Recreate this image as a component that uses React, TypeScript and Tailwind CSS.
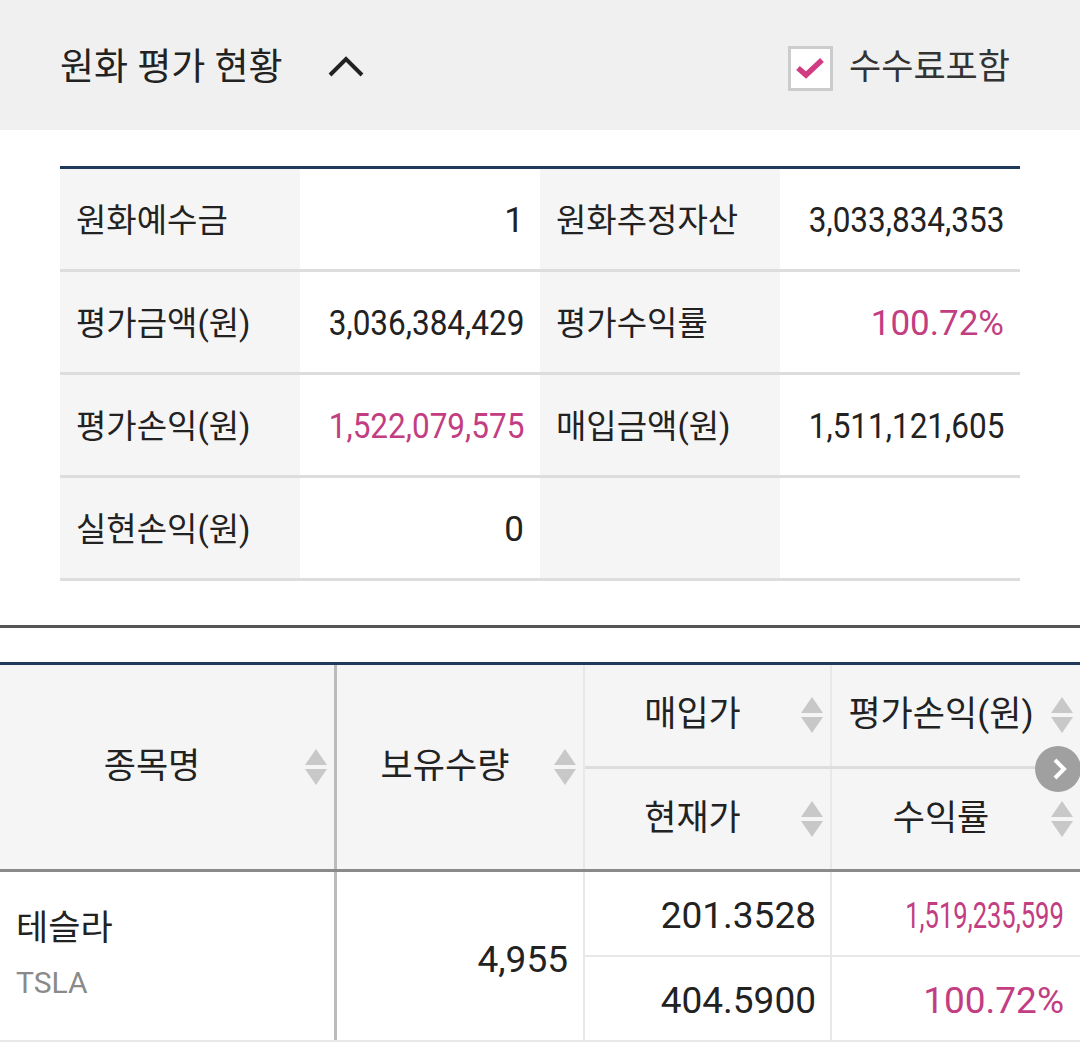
import React from 'react';

const PINK = 'text-[#c23d82]';

const SortIcon = () => (
  <svg width="24" height="38" viewBox="0 0 24 38" className="shrink-0">
    <path d="M12 1 L23 17 L1 17 Z" fill="#c8c8c8" />
    <path d="M1 21 L23 21 L12 37 Z" fill="#c8c8c8" />
  </svg>
);

const HeadCell = ({ label, className = '' }: { label: string; className?: string }) => (
  <div className={`flex items-center pr-[6px] ${className}`}>
    <span className="flex-1 text-center">{label}</span>
    <SortIcon />
  </div>
);

// long amounts are squeezed to fit the cell, like the app does
const Num = ({ v, squeeze }: { v: string; squeeze?: boolean }) =>
  squeeze ? <span className="inline-block origin-right scale-x-[0.9]">{v}</span> : <span>{v}</span>;

const summaryRows: { l1: string; v1: string; p1?: boolean; l2: string; v2: string; p2?: boolean }[] = [
  { l1: '원화예수금', v1: '1', l2: '원화추정자산', v2: '3,033,834,353' },
  { l1: '평가금액(원)', v1: '3,036,384,429', l2: '평가수익률', v2: '100.72%', p2: true },
  { l1: '평가손익(원)', v1: '1,522,079,575', p1: true, l2: '매입금액(원)', v2: '1,511,121,605' },
  { l1: '실현손익(원)', v1: '0', l2: '', v2: '' },
];

export default function App() {
  return (
    <div className="w-[1080px] h-[1050px] overflow-hidden bg-white text-[#222] font-['Roboto','Noto_Sans_CJK_KR',sans-serif]">
      {/* header */}
      <div className="h-[130px] bg-[#f0f0f0] flex items-center justify-between pl-[60px] pr-[70px] pt-[6px]">
        <div className="flex items-center">
          <h1 className="text-[37px] font-normal">원화 평가 현황</h1>
          <svg width="38" height="24" viewBox="0 0 38 24" className="ml-[44px] mb-[4px]">
            <path d="M3 21 L19 5 L35 21" fill="none" stroke="#222" strokeWidth="4" />
          </svg>
        </div>
        <div className="flex items-center">
          <div className="w-[45px] h-[45px] border-[3px] border-[#cccccc] bg-white flex items-center justify-center">
            <svg width="30" height="24" viewBox="0 0 30 24">
              <path d="M3 12 L11 19 L27 4" fill="none" stroke="#d13b82" strokeWidth="5.5" />
            </svg>
          </div>
          <span className="ml-[16px] text-[35px] text-[#333]">수수료포함</span>
        </div>
      </div>

      {/* summary */}
      <div className="px-[60px] pt-[36px]">
        <div className="border-t-[3px] border-[#1f3a5a]">
          {summaryRows.map((r, i) => (
            <div key={i} className="grid grid-cols-4 h-[103px] border-b-[3px] border-[#dddddd]">
              <div className="bg-[#f5f5f5] flex items-center pl-[16px] pt-[4px] text-[33px]">{r.l1}</div>
              <div className={`flex items-center justify-end pr-[16px] pt-[4px] text-[35px] ${r.p1 ? PINK : ''}`}>
                <Num v={r.v1} squeeze={r.v1.length > 8} />
              </div>
              <div className="bg-[#f5f5f5] flex items-center pl-[16px] pt-[4px] text-[33px]">{r.l2}</div>
              <div className={`flex items-center justify-end pr-[16px] pt-[4px] text-[35px] ${r.p2 ? PINK : ''}`}>
                <Num v={r.v2} squeeze={r.v2.length > 8} />
              </div>
            </div>
          ))}
        </div>
      </div>

      <div className="mt-[44px] border-t-[3px] border-[#555]" />

      {/* holdings table */}
      <div className="mt-[34px] border-t-[3px] border-[#1f3a5a] relative">
        <div className="flex h-[207px] bg-[#f5f5f5] border-b-[3px] border-[#8a8a8a] text-[35px]">
          <HeadCell label="종목명" className="w-[337px] border-r-[3px] border-[#bbbbbb]" />
          <HeadCell label="보유수량" className="w-[248px] border-r-2 border-[#e8e8e8]" />
          <div className="flex-1 flex flex-col">
            <div className="flex flex-1 border-b-[3px] border-[#dddddd]">
              <HeadCell label="매입가" className="w-[247px] border-r-2 border-[#e8e8e8]" />
              <HeadCell label="평가손익(원)" className="flex-1" />
            </div>
            <div className="flex flex-1">
              <HeadCell label="현재가" className="w-[247px] border-r-2 border-[#e8e8e8]" />
              <HeadCell label="수익률" className="flex-1" />
            </div>
          </div>
        </div>

        <div className="absolute right-[-1px] top-[81px] w-[46px] h-[46px] rounded-full bg-[#a0a0a0] flex items-center justify-center">
          <svg width="18" height="24" viewBox="0 0 18 24" className="ml-[3px]">
            <path d="M4 3 L13 12 L4 21" fill="none" stroke="#fff" strokeWidth="4" />
          </svg>
        </div>

        <div className="flex h-[170px] border-b-2 border-[#e8e8e8]">
          <div className="w-[337px] border-r-[3px] border-[#bbbbbb] flex flex-col justify-center pl-[16px] pb-[6px]">
            <span className="text-[35px] leading-[46px]">테슬라</span>
            <span className="text-[30px] text-[#8a8a8a] mt-[14px] leading-[34px]">TSLA</span>
          </div>
          <div className="w-[248px] border-r-2 border-[#e8e8e8] flex items-center justify-end pr-[15px] text-[37px] pt-[8px]">
            4,955
          </div>
          <div className="flex-1 flex flex-col text-[37px]">
            <div className="flex flex-1 border-b-2 border-[#e8e8e8]">
              <div className="w-[247px] border-r-2 border-[#e8e8e8] flex items-center justify-end pr-[14px] pt-[4px]">201.3528</div>
              <div className={`flex-1 flex items-center justify-end pr-[16px] pt-[4px] ${PINK}`}>
                <span className="inline-block origin-right scale-x-[0.69]">1,519,235,599</span>
              </div>
            </div>
            <div className="flex flex-1">
              <div className="w-[247px] border-r-2 border-[#e8e8e8] flex items-center justify-end pr-[14px] pt-[4px]">404.5900</div>
              <div className={`flex-1 flex items-center justify-end pr-[16px] pt-[4px] ${PINK}`}>100.72%</div>
            </div>
          </div>
        </div>
      </div>
    </div>
  );
}
